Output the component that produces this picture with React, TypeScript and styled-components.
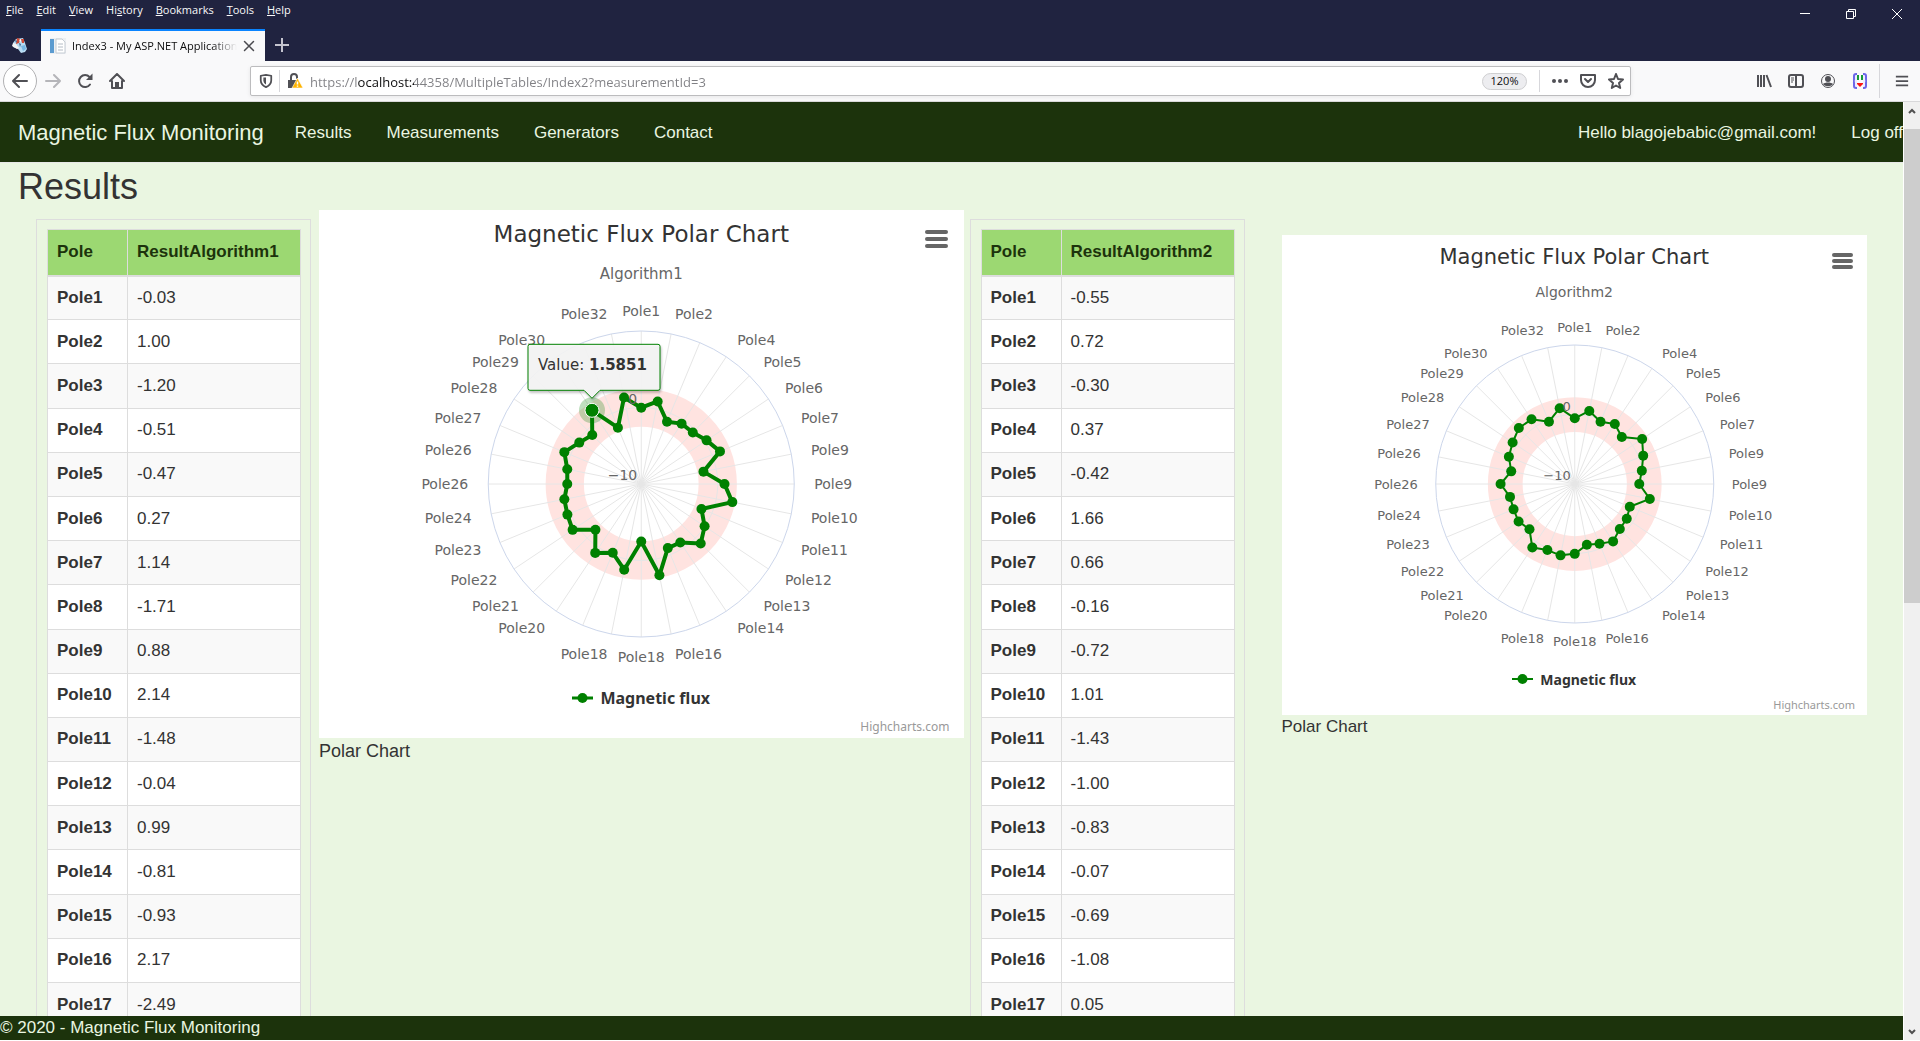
import React from "react";
import styled, { createGlobalStyle } from "styled-components";

const ui = `"Open Sans", "Noto Sans", sans-serif`;
const body = `"Liberation Sans", Arial, sans-serif`;
const chartFont = `"DejaVu Sans", Verdana, sans-serif`;

const colors = {
  dark: "#1c330c",
  pale: "#eaf6e1",
  lime: "#9cd872",
  line: "#dddddd",
  text: "#333333",
  series: "#008000",
};

const GlobalStyle = createGlobalStyle`
  * { box-sizing: border-box; }
  body { margin: 0; overflow: hidden; font-family: ${body}; font-size: 17px; color: ${colors.text}; }
  button { font: inherit; color: inherit; background: none; border: 0; padding: 0; cursor: pointer; }
  a { color: inherit; text-decoration: none; }
`;

/* ---------- browser window ---------- */

const Window = styled.div`
  display: flex;
  flex-direction: column;
  height: 100vh;
  padding-bottom: 1px;
  background: #fff;
`;

const TitleArea = styled.header`
  display: flex;
  justify-content: space-between;
  height: 61px;
  background: #202340;
  color: #f9f9fa;
  font: 11px/16px ${ui};
`;

const TitleLeft = styled.div`
  display: flex;
  flex-direction: column;
  justify-content: space-between;
`;

const MenuBar = styled.nav`
  display: flex;
  gap: 13px;
  padding: 2px 6px;
`;

const TabStrip = styled.div`
  display: flex;
  align-items: stretch;
  height: 32px;
`;

const PinnedTab = styled.button`
  display: grid;
  place-items: center;
  width: 40px;
  margin-right: 1px;
`;

const Tab = styled.div`
  display: flex;
  align-items: center;
  width: 224px;
  padding: 0 10px 0 9px;
  gap: 6px;
  border-top: 2px solid #0a84ff;
  background: #f9f9fa;
  color: #0c0c0d;
`;

const TabTitle = styled.span`
  flex: 1;
  overflow: hidden;
  white-space: nowrap;
  mask-image: linear-gradient(to right, #000 85%, transparent);
`;

const IconButton = styled.button<{ $w?: number }>`
  display: grid;
  place-items: center;
  width: ${(p) => p.$w ?? 32}px;
  height: 100%;
  flex: none;
`;

const WindowControls = styled.div`
  display: flex;
  height: 28px;
`;

const Toolbar = styled.div`
  display: flex;
  align-items: center;
  height: 41px;
  padding-left: 3px;
  background: #f9f9fa;
  border-bottom: 1px solid #d8d8da;
  color: #505055;
`;

const BackButton = styled.button`
  display: grid;
  place-items: center;
  width: 34px;
  height: 34px;
  border: 1px solid #b1b1b3;
  border-radius: 50%;
  background: #fff;
`;

const AddressBox = styled.form`
  display: flex;
  align-items: center;
  flex: 1;
  height: 30px;
  margin: 0 117px;
  padding: 0 2px;
  background: #fff;
  border: 1px solid #bcbcbe;
  border-radius: 2px;
  box-shadow: 0 1px 4px rgba(0, 0, 0, 0.08);
`;

const Divider = styled.span<{ $h: number; $gap?: number }>`
  width: 1px;
  height: ${(p) => p.$h}px;
  margin: 0 ${(p) => p.$gap ?? 0}px;
  background: #d7d7db;
`;

const Address = styled.input`
  flex: 1;
  min-width: 0;
  border: 0;
  outline: 0;
  padding: 2px 0 0;
  font: 13px/20px ${ui};
  color: transparent;
  background: linear-gradient(to right, #808084 48px, #0c0c0d 48px 104px, #808084 104px);
  background-clip: text;
  -webkit-background-clip: text;
`;

const ZoomPill = styled.button`
  width: 45px;
  height: 17px;
  margin-right: 4px;
  border: 1px solid #cfcfd1;
  border-radius: 9px;
  background: #ededf0;
  color: #0c0c0d;
  font: 11px/14px ${ui};
`;

const ToolbarEnd = styled.div`
  display: flex;
  align-items: center;
  height: 100%;
`;

const Viewport = styled.div`
  display: flex;
  flex: 1;
  min-height: 0;
`;

const ScrollTrack = styled.div`
  display: flex;
  flex-direction: column;
  width: 17px;
  background: #f0f0f0;
  border-left: 1px solid #fff;
  color: #505050;
`;

const ScrollArrow = styled.button`
  display: grid;
  place-items: center;
  height: 17px;
`;

const ScrollSpace = styled.div`
  flex: 1;
  padding-top: 10px;
`;

const ScrollThumb = styled.div`
  height: 53%;
  background: #cdcdcd;
`;

/* ---------- page ---------- */

const Page = styled.div`
  display: flex;
  flex-direction: column;
  flex: 1;
  min-width: 0;
  background: ${colors.pale};
`;

const NavBar = styled.nav`
  display: flex;
  align-items: center;
  gap: 31px;
  height: 61px;
  padding: 1px 0 0 18px;
  background: ${colors.dark};
  border-bottom: 1px solid #e7e7e7;
  color: ${colors.pale};
`;

const Brand = styled.a`
  font-size: 22px;
`;

const NavGroup = styled.div<{ $end?: boolean }>`
  display: flex;
  gap: 35px;
  margin-left: ${(p) => (p.$end ? "auto" : 0)};
`;

const Main = styled.main`
  flex: 1;
  min-height: 0;
  overflow-y: auto;
  scrollbar-width: none;
`;

const Heading = styled.h2`
  margin: 0;
  padding: 4px 18px 3px;
  font-size: 36px;
  line-height: 40px;
  font-weight: 400;
`;

const Columns = styled.div`
  display: grid;
  grid-template-columns: 275px minmax(0, 1fr) 275px minmax(0, 1fr);
  align-items: start;
  padding-left: 36px;
`;

const TableFrame = styled.div`
  margin-top: 9px;
  padding: 9px 9px 9px 10px;
  border: 1px solid ${colors.line};
`;

const DataTable = styled.table`
  width: 100%;
  height: 1461px;
  border-collapse: collapse;
  background: #fff;
  font-size: 17px;
  line-height: 24px;

  th, td {
    height: 44px;
    padding: 9px;
    border: 1px solid ${colors.line};
    text-align: left;
  }
  th:first-child { width: 80px; }
  thead th {
    height: 46px;
    background: ${colors.lime};
    color: ${colors.dark};
    border-bottom-width: 2px;
  }
  tbody tr:nth-child(odd) { background: #f9f9f9; }
`;

const ChartColumn = styled.div<{ $large?: boolean }>`
  padding: ${(p) => (p.$large ? "0 6px 0 8px" : "25px 36px 0 37px")};
`;

const Figure = styled.figure`
  margin: 0;
`;

const ChartCard = styled.div`
  position: relative;
  display: flex;
  flex-direction: column;
  background: #fff;
  font-family: ${chartFont};
  text-align: center;
`;

const ChartTitle = styled.h3<{ $large?: boolean }>`
  margin: 0;
  padding-top: ${(p) => (p.$large ? 10 : 9)}px;
  font-weight: 400;
  font-size: ${(p) => (p.$large ? 23 : 21)}px;
  line-height: ${(p) => (p.$large ? 28 : 26)}px;
`;

const ChartSubtitle = styled.p<{ $large?: boolean }>`
  margin: ${(p) => (p.$large ? 16 : 13)}px 0 0;
  color: #666;
  font-size: ${(p) => (p.$large ? 15 : 14)}px;
  line-height: ${(p) => (p.$large ? 20 : 18)}px;
`;

const ChartMenu = styled.button<{ $large?: boolean }>`
  position: absolute;
  top: ${(p) => (p.$large ? 20 : 18)}px;
  right: ${(p) => (p.$large ? 16 : 14)}px;
  display: flex;
  flex-direction: column;
  justify-content: space-between;
  width: ${(p) => (p.$large ? 23 : 21)}px;
  height: ${(p) => (p.$large ? 18 : 16)}px;
`;

const MenuLine = styled.span`
  height: 4px;
  border-radius: 2px;
  background: #666;
`;

const Plot = styled.svg`
  display: block;
  width: 100%;
  font-family: ${chartFont};
`;

const Legend = styled.button<{ $large?: boolean }>`
  display: flex;
  align-items: center;
  justify-content: center;
  align-self: center;
  gap: 7px;
  height: ${(p) => (p.$large ? 28 : 24)}px;
  font-family: "Noto Sans", ${chartFont};
  font-size: ${(p) => (p.$large ? 16 : 14)}px;
  font-weight: 700;
`;

const Credits = styled.a<{ $large?: boolean }>`
  align-self: flex-end;
  padding: ${(p) => (p.$large ? "7px 14px 3px" : "6px 12px 2px")};
  color: #999;
  font: ${(p) => (p.$large ? 12 : 11)}px/16px "Noto Sans", ${chartFont};
`;

const Caption = styled.figcaption<{ $large?: boolean }>`
  font-size: ${(p) => (p.$large ? 18 : 17)}px;
  line-height: ${(p) => (p.$large ? 26 : 24)}px;
`;

const Footer = styled.footer`
  background: ${colors.dark};
  color: ${colors.pale};
  line-height: 24px;
`;

/* ---------- data ---------- */

const algorithm1 = [
  -0.03, 1.0, -1.2, -0.51, -0.47, 0.27, 1.14, -1.71, 0.88, 2.14, -1.48, -0.04, 0.99, -0.81, -0.93, 2.17,
  -2.49, 1.42, -0.26, 0.83, -1.53, 0.79, 0.45, 0.25, -0.33, -0.14, 0.88, -0.26, -0.94, 1.5851, -2.03, 1.54,
];

const algorithm2 = [
  -0.55, 0.72, -0.3, 0.37, -0.42, 1.66, 0.66, -0.16, -0.72, 1.01, -1.43, -1.0, -0.83, -0.07, -0.69, -1.08,
  0.05, 0.47, 0.29, 0.99, -0.79, -0.28, -0.47, -0.5, 0.67, -0.68, 0.26, 0.75, 1.38, 1.19, -0.3, 1.12,
];

/* pole number printed at each spoke; 0 leaves the spoke unlabelled */
const spokeLabels = [
  1, 2, 0, 4, 5, 6, 7, 9, 9, 10, 11, 12, 13, 14, 0, 16, 18, 18, 0, 20, 21, 22, 23, 24, 26, 26, 27, 28, 29, 30, 0, 32,
];

/* ---------- parts ---------- */

function ResultTable({ name, values }: { name: string; values: number[] }) {
  return (
    <TableFrame>
      <DataTable>
        <thead>
          <tr>
            <th scope="col">Pole</th>
            <th scope="col">{name}</th>
          </tr>
        </thead>
        <tbody>
          {values.map((v, i) => (
            <tr key={i}>
              <th scope="row">Pole{i + 1}</th>
              <td>{v.toFixed(2)}</td>
            </tr>
          ))}
        </tbody>
      </DataTable>
    </TableFrame>
  );
}

const polar = (index: number, r: number) => {
  const a = (index * Math.PI) / 16;
  return { x: r * Math.sin(a), y: -r * Math.cos(a) };
};

interface ChartProps {
  subtitle: string;
  values: number[];
  large?: boolean;
  hovered?: number;
}

function PolarChart({ subtitle, values, large, hovered }: ChartProps) {
  const radius = large ? 153 : 139;
  const width = large ? 644 : 585;
  const height = large ? 400 : 366;
  const labelSize = large ? 14 : 13;
  const scale = (v: number) => ((v + 10) / 20) * radius;
  const points = values.map((v, i) => polar(i, scale(v)));
  const hot = hovered === undefined ? undefined : points[hovered];
  return (
    <Figure>
      <ChartCard>
        <ChartTitle $large={large}>Magnetic Flux Polar Chart</ChartTitle>
        <ChartSubtitle $large={large}>{subtitle}</ChartSubtitle>
        <ChartMenu $large={large} aria-label="Chart menu">
          <MenuLine />
          <MenuLine />
          <MenuLine />
        </ChartMenu>
        <Plot height={height} viewBox={`${-width / 2} ${-height / 2} ${width} ${height}`}>
          <circle r={radius / 2} fill="none" stroke="#ffe3e0" strokeWidth={radius / 4} />
          <g stroke="#e6e6e6" fill="none">
            <circle r={radius / 2} />
            {values.map((_, i) => {
              const end = polar(i, radius);
              return <line key={i} x2={end.x} y2={end.y} />;
            })}
          </g>
          <circle r={radius} fill="none" stroke="#ccd6eb" />
          <polygon
            points={points.map((p) => `${p.x},${p.y}`).join(" ")}
            fill="none"
            stroke={colors.series}
            strokeWidth={large ? 4 : 2}
            strokeLinejoin="round"
          />
          {points.map((p, i) => (
            <circle key={i} cx={p.x} cy={p.y} r={5} fill={colors.series} />
          ))}
          <g fill="#666" fontSize={labelSize}>
            {spokeLabels.map((n, i) => {
              if (!n) return null;
              const p = polar(i, radius + (large ? 20 : 18));
              const anchor = i % 16 === 0 ? "middle" : i < 16 ? "start" : "end";
              return (
                <text key={i} x={p.x} y={p.y + 5} textAnchor={anchor}>
                  Pole{n}
                </text>
              );
            })}
            <text x={-4} y={-4} textAnchor="end">−10</text>
            <text x={-4} y={-radius / 2 - 4} textAnchor="end">0</text>
          </g>
          {hot && (
            <g transform={`translate(${hot.x} ${hot.y})`}>
              <circle r={13} fill={colors.series} opacity={0.25} />
              <circle r={7} fill={colors.series} stroke="#fff" />
              <path
                d="M-62 -66h128a2 2 0 0 1 2 2v42a2 2 0 0 1 -2 2h-58l-8 8l-8 -8h-54a2 2 0 0 1 -2 -2v-42a2 2 0 0 1 2 -2z"
                fill="#f7f7f7"
                fillOpacity={0.9}
                stroke={colors.series}
                style={{ filter: "drop-shadow(1px 2px 1px rgba(0,0,0,.25))" }}
              />
              <text x={-54} y={-40} fontSize={15} fill="#333">
                Value: <tspan fontWeight={700}>1.5851</tspan>
              </text>
            </g>
          )}
        </Plot>
        <Legend $large={large}>
          <svg width="21" height="12" viewBox="0 0 21 12" aria-hidden="true">
            <path d="M0 6h21" stroke={colors.series} strokeWidth={large ? 3 : 2} />
            <circle cx="10.5" cy="6" r="5" fill={colors.series} />
          </svg>
          Magnetic flux
        </Legend>
        <Credits $large={large} href="#credits">Highcharts.com</Credits>
      </ChartCard>
      <Caption $large={large}>Polar Chart</Caption>
    </Figure>
  );
}

const line = { fill: "none", stroke: "currentColor", strokeWidth: 2, strokeLinecap: "round", strokeLinejoin: "round" } as const;

const Icon = ({ children, size = 16 }: { children: React.ReactNode; size?: number }) => (
  <svg width={size} height={size} viewBox="0 0 16 16" aria-hidden="true">
    {children}
  </svg>
);

const menus = ["File", "Edit", "View", "History", "Bookmarks", "Tools", "Help"];
const accessKeys = [0, 0, 0, 2, 0, 0, 0];

function BrowserChrome() {
  return (
    <>
      <TitleArea>
        <TitleLeft>
          <MenuBar>
            {menus.map((m, i) => (
              <button key={m}>
                {m.slice(0, accessKeys[i])}
                <u>{m[accessKeys[i]]}</u>
                {m.slice(accessKeys[i] + 1)}
              </button>
            ))}
          </MenuBar>
          <TabStrip>
            <PinnedTab aria-label="Pinned tab">
              <Icon>
                <path d="M1 6l3-4 7-1 2 5 2 6-2 3-4 1-3-4-5-2z" fill="#b9dcf2" />
                <path d="M1 6l3 1 3 4-2 1-5-3z" fill="#f4f4f4" />
                <path d="M5 1l3 1-1 4-3 1zM9 2l3 0 0 4-2 0z" fill="#cf4a35" />
                <path d="M3 3l2 1-1 2zM7 6l2 1-1 3z" fill="#35628f" />
                <path d="M9 9l4-1 1 4-3 2z" fill="#78b8e4" />
                <path d="M7 3l2-1v3z" fill="#fff" />
              </Icon>
            </PinnedTab>
            <Tab>
              <Icon>
                <rect width="16" height="16" fill="#eceff2" />
                <rect width="4" height="14" x="0" y="1" fill="#5b9bd0" />
                <path d="M6 1h6l3 3v11H6z" fill="#fff" stroke="#c5ccd3" />
                <path d="M8 6h5M8 9h5M8 12h5" stroke="#b4bcc5" />
              </Icon>
              <TabTitle>Index3 - My ASP.NET Application</TabTitle>
              <IconButton $w={12} aria-label="Close tab">
                <Icon size={12}>
                  <path {...line} d="M2 2l12 12M14 2L2 14" stroke="#4a4a4f" />
                </Icon>
              </IconButton>
            </Tab>
            <IconButton $w={34} aria-label="New tab">
              <Icon>
                <path d="M8 1v14M1 8h14" stroke="#c4c4cf" strokeWidth="2" />
              </Icon>
            </IconButton>
          </TabStrip>
        </TitleLeft>
        <WindowControls>
          <IconButton $w={46} aria-label="Minimize">
            <svg width="10" height="10"><path d="M0 4.5h10" stroke="#fff" /></svg>
          </IconButton>
          <IconButton $w={46} aria-label="Restore">
            <svg width="10" height="10" fill="none" stroke="#fff">
              <path d="M.5 2.5h7v7h-7zM2.5 2.5v-2h7v7h-2" />
            </svg>
          </IconButton>
          <IconButton $w={46} aria-label="Close">
            <svg width="10" height="10"><path d="M0 0l10 10M10 0L0 10" stroke="#fff" /></svg>
          </IconButton>
        </WindowControls>
      </TitleArea>
      <Toolbar>
        <BackButton aria-label="Back">
          <Icon><path {...line} d="M15 8H1M7 2L1 8l6 6" /></Icon>
        </BackButton>
        <IconButton aria-label="Forward">
          <Icon><path {...line} d="M1 8h14M9 2l6 6-6 6" stroke="#b5b5b9" /></Icon>
        </IconButton>
        <IconButton aria-label="Reload">
          <Icon>
            <path {...line} d="M13 11.500A6 6 0 1 1 12.500 4" />
            <path d="M15.500 .5v6.500h-6.500z" fill="currentColor" />
          </Icon>
        </IconButton>
        <IconButton aria-label="Home">
          <Icon>
            <path {...line} d="M1 8l7-7 7 7M3 8v7h10V8" />
            <path d="M6 15V9h4v6z" fill="currentColor" />
          </Icon>
        </IconButton>
        <AddressBox>
          <IconButton $w={26} type="button" aria-label="Tracking protection">
            <Icon size={14}>
              <path {...line} d="M8 1l6 1v5c0 4-2 6-6 8-4-2-6-4-6-8V2z" />
              <path d="M8 4v8c-2-1-3-3-3-5V4z" fill="currentColor" />
            </Icon>
          </IconButton>
          <Divider $h={22} />
          <IconButton $w={30} type="button" aria-label="Connection">
            <Icon>
              <path d="M1 7h10v8H1z" fill="currentColor" />
              <path {...line} d="M4 7V4a3 3 0 0 1 6 0v1" />
              <path d="M10.500 5l5.500 10H5z" fill="#ffb400" stroke="#fff" strokeWidth=".6" />
              <path d="M10.500 8.500v3M10.500 12.500v1.200" stroke="#fff" strokeWidth="1.500" />
            </Icon>
          </IconButton>
          <Address
            aria-label="Address"
            defaultValue="https://localhost:44358/MultipleTables/Index2?measurementId=3"
          />
          <ZoomPill type="button">120%</ZoomPill>
          <Divider $h={22} $gap={8} />
          <IconButton $w={24} type="button" aria-label="Page actions">
            <Icon>
              <g fill="currentColor"><circle cx="2" cy="8" r="2" /><circle cx="8" cy="8" r="2" /><circle cx="14" cy="8" r="2" /></g>
            </Icon>
          </IconButton>
          <IconButton type="button" aria-label="Save to Pocket">
            <Icon>
              <path {...line} d="M1 2h14v5a7 7 0 0 1-14 0zM5 6l3 3 3-3" />
            </Icon>
          </IconButton>
          <IconButton $w={24} type="button" aria-label="Bookmark">
            <Icon>
              <path {...line} d="M8 1l2 5 5 .5-4 3.500 1.200 5L8 12.500 3.800 15 5 10 1 6.500 6 6z" />
            </Icon>
          </IconButton>
        </AddressBox>
        <ToolbarEnd>
          <IconButton aria-label="Library">
            <Icon>
              <path d="M2 2v12M5 2v12M8 2v12M10.500 2l4.500 12" stroke="currentColor" strokeWidth="2" />
            </Icon>
          </IconButton>
          <IconButton aria-label="Sidebars">
            <Icon>
              <rect {...line} x="1" y="2" width="14" height="12" rx="2" />
              <path d="M8 2v12" stroke="currentColor" strokeWidth="2" />
              <path d="M3 5h3M3 7h3M3 9h2" stroke="currentColor" />
            </Icon>
          </IconButton>
          <IconButton aria-label="Account">
            <Icon>
              <circle cx="8" cy="8" r="6.500" fill="none" stroke="currentColor" />
              <circle cx="8" cy="6" r="3" fill="currentColor" />
              <path d="M3 11c2-2 8-2 10 0-2 3-8 3-10 0z" fill="currentColor" />
            </Icon>
          </IconButton>
          <IconButton aria-label="Extension">
            <Icon>
              <path
                d="M5 1H4Q2 1 2 3v3q0 2-1 2 1 0 1 2v3q0 2 2 2h1M11 1h1q2 0 2 2v3q0 2 1 2-1 0-1 2v3q0 2-2 2h-1"
                fill="#ececff"
                stroke="#6d67e8"
                strokeWidth="2"
              />
              <path d="M5 2h2v5H5zM9 2h2v5H9z" fill="#169b35" />
              <path d="M5 10h6v1l-3 3-3-3z" fill="#fb1414" />
            </Icon>
          </IconButton>
          <Divider $h={34} $gap={3} />
          <IconButton $w={37} aria-label="Open menu">
            <Icon size={14}>
              <path d="M1 3h14M1 8h14M1 13h14" stroke="currentColor" strokeWidth="2" />
            </Icon>
          </IconButton>
        </ToolbarEnd>
      </Toolbar>
    </>
  );
}

export default function App() {
  return (
    <Window>
      <GlobalStyle />
      <BrowserChrome />
      <Viewport>
        <Page>
          <NavBar>
            <Brand href="#home">Magnetic Flux Monitoring</Brand>
            <NavGroup>
              <a href="#results">Results</a>
              <a href="#measurements">Measurements</a>
              <a href="#generators">Generators</a>
              <a href="#contact">Contact</a>
            </NavGroup>
            <NavGroup $end>
              <a href="#account">Hello blagojebabic@gmail.com!</a>
              <a href="#logoff">Log off</a>
            </NavGroup>
          </NavBar>
          <Main>
            <Heading>Results</Heading>
            <Columns>
              <ResultTable name="ResultAlgorithm1" values={algorithm1} />
              <ChartColumn $large>
                <PolarChart subtitle="Algorithm1" values={algorithm1} large hovered={29} />
              </ChartColumn>
              <ResultTable name="ResultAlgorithm2" values={algorithm2} />
              <ChartColumn>
                <PolarChart subtitle="Algorithm2" values={algorithm2} />
              </ChartColumn>
            </Columns>
          </Main>
          <Footer>© 2020 - Magnetic Flux Monitoring</Footer>
        </Page>
        <ScrollTrack>
          <ScrollArrow aria-label="Scroll up">
            <svg width="8" height="6"><path d="M1 5l3-3 3 3" fill="none" stroke="currentColor" strokeWidth="2" /></svg>
          </ScrollArrow>
          <ScrollSpace>
            <ScrollThumb />
          </ScrollSpace>
          <ScrollArrow aria-label="Scroll down">
            <svg width="8" height="6"><path d="M1 1l3 3 3-3" fill="none" stroke="currentColor" strokeWidth="2" /></svg>
          </ScrollArrow>
        </ScrollTrack>
      </Viewport>
    </Window>
  );
}
